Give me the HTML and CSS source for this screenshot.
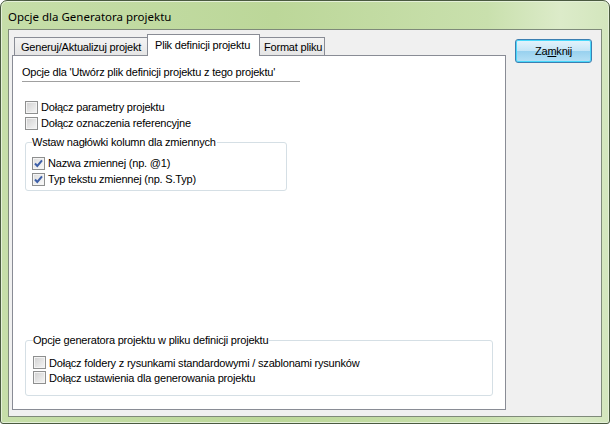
FILE: index.html
```html
<!DOCTYPE html>
<html>
<head>
<meta charset="utf-8">
<link rel="stylesheet" href="styles.css">
</head>
<body>
<div class="window">
  <div class="titlebar"><span class="title">Opcje dla Generatora projektu</span></div>
  <div class="client">
    <div class="tabctl">
      <div class="tabs">
        <div class="tab t1">Generuj/Aktualizuj projekt</div>
        <div class="tab sel">Plik definicji projektu</div>
        <div class="tab t3">Format pliku</div>
      </div>
      <div class="panel">
        <div class="heading">Opcje dla 'Utwórz plik definicji projektu z tego projektu'</div>
        <div class="checks top">
          <div class="row"><span class="cb"></span><span>Dołącz parametry projektu</span></div>
          <div class="row"><span class="cb"></span><span>Dołącz oznaczenia referencyjne</span></div>
        </div>
        <div class="group g1">
          <div class="legend">Wstaw nagłówki kolumn dla zmiennych</div>
          <div class="row"><span class="cb on"><svg viewBox="0 0 13 13" width="13" height="13"><path d="M3 6.5 L5.3 9 L10 3.3" fill="none" stroke="#3d5fa8" stroke-width="2"/></svg></span><span>Nazwa zmiennej (np. @1)</span></div>
          <div class="row"><span class="cb on"><svg viewBox="0 0 13 13" width="13" height="13"><path d="M3 6.5 L5.3 9 L10 3.3" fill="none" stroke="#3d5fa8" stroke-width="2"/></svg></span><span>Typ tekstu zmiennej (np. S.Typ)</span></div>
        </div>
        <div class="group g2">
          <div class="legend">Opcje generatora projektu w pliku definicji projektu</div>
          <div class="row"><span class="cb"></span><span>Dołącz foldery z rysunkami standardowymi / szablonami rysunków</span></div>
          <div class="row"><span class="cb"></span><span>Dołącz ustawienia dla generowania projektu</span></div>
        </div>
      </div>
    </div>
    <div class="side">
      <button class="btn">Za<u>m</u>knij</button>
    </div>
  </div>
</div>
</body>
</html>
```
FILE: styles.css
```css
html, body { margin: 0; padding: 0; }
body { width: 610px; height: 424px; overflow: hidden; background: #ffffff; font-family: "Liberation Sans", Arial, sans-serif; font-size: 11px; letter-spacing: -0.2px; color: #000; }
.window {
  box-sizing: border-box; width: 610px; height: 424px;
  border: 1px solid #4a5a40; border-radius: 7px 7px 3px 3px;
  background: linear-gradient(90deg, #c6dea9 0%, #bcd799 45%, #c9e0ad 80%, #dcebc9 92%, #d3e6bd 100%);
  padding: 0 7px 6px 7px; display: flex; flex-direction: column;
  box-shadow: inset 0 0 0 1px #e4f0d8;
}
.titlebar { height: 28px; display: flex; align-items: center; }
.title { font-family: "Noto Sans", "Open Sans", sans-serif; font-size: 11.5px; letter-spacing: 0; color: #000; padding-top: 2px; }
.client { flex: 1; background: #f0f0f0; border: 1px solid #7f8a7a; display: flex; }
.tabctl { margin: 4px 0 0 3px; display: flex; flex-direction: column; }
.tabs { display: flex; align-items: flex-end; padding-left: 2px; height: 21px; position: relative; z-index: 1; }
.tab {
  box-sizing: border-box; height: 18px; border: 1px solid #898c95; border-bottom: none;
  background: linear-gradient(#f3f3f3, #e5e5e5); padding: 0 5px; line-height: 18px;
  white-space: nowrap;
}
.t1 { width: 134px; padding-left: 6px; }
.sel { width: 113px; height: 22px; background: #fff; line-height: 20px; margin-left: -1px; margin-bottom: -1px; padding-left: 7px; }
.t3 { width: 66px; margin-left: -1px; padding-left: 4px; }
.panel {
  box-sizing: border-box; width: 494px; height: 355px; background: #fff; border: 1px solid #898c95;
  padding: 10px 0 13px 9px; display: flex; flex-direction: column;
}
.heading { width: 278px; line-height: 13px; padding-bottom: 2px; border-bottom: 1px solid #a0a0a0; white-space: nowrap; }
.checks.top { margin-top: 17px; padding-left: 3px; }
.row { display: flex; align-items: center; height: 16px; white-space: nowrap; }
.row span:last-child { margin-left: 3px; }
.cb {
  box-sizing: border-box; width: 13px; height: 13px; border: 1px solid #8e8f8f; flex: none;
  background: linear-gradient(135deg, #d0d0d0, #f6f6f6); box-shadow: inset 0 0 0 1px #f4f4f4;
  display: inline-block; position: relative;
}
.cb.on { background: linear-gradient(135deg, #dcdcdc, #fbfbfb); }
.cb svg { position: absolute; left: -1px; top: -1px; }
.group {
  box-sizing: border-box; border: 1px solid #d5dfe5; border-radius: 3px; margin-left: 3px;
  padding: 0 0 0 6px; display: flex; flex-direction: column; align-items: flex-start;
}
.legend { background: #fff; margin: -7px 0 0 0; padding: 0 1px 0 0; line-height: 13px; white-space: nowrap; }
.g1 { width: 262px; height: 49px; margin-top: 11px; }
.g1 .legend { margin-bottom: 6px; }
.g2 { width: 468px; height: 56px; margin-top: auto; padding-left: 7px; }
.g2 .legend { margin-bottom: 8px; }
.g2 .row { height: 15px; }
.side { margin-left: 9px; padding-top: 9px; }
.btn {
  box-sizing: border-box; width: 77px; height: 24px; font-family: "Liberation Sans", Arial, sans-serif; font-size: 11px; letter-spacing: -0.2px;
  border: 1px solid #3c7fb1; border-radius: 3px;
  background: linear-gradient(#e5f4fc 0%, #c4e5f6 50%, #98d1ef 51%, #b6e0f5 100%);
  box-shadow: inset 0 0 0 1px #48d8fb; color: #000; padding: 0;
}
.btn u { text-decoration: underline; }
```
